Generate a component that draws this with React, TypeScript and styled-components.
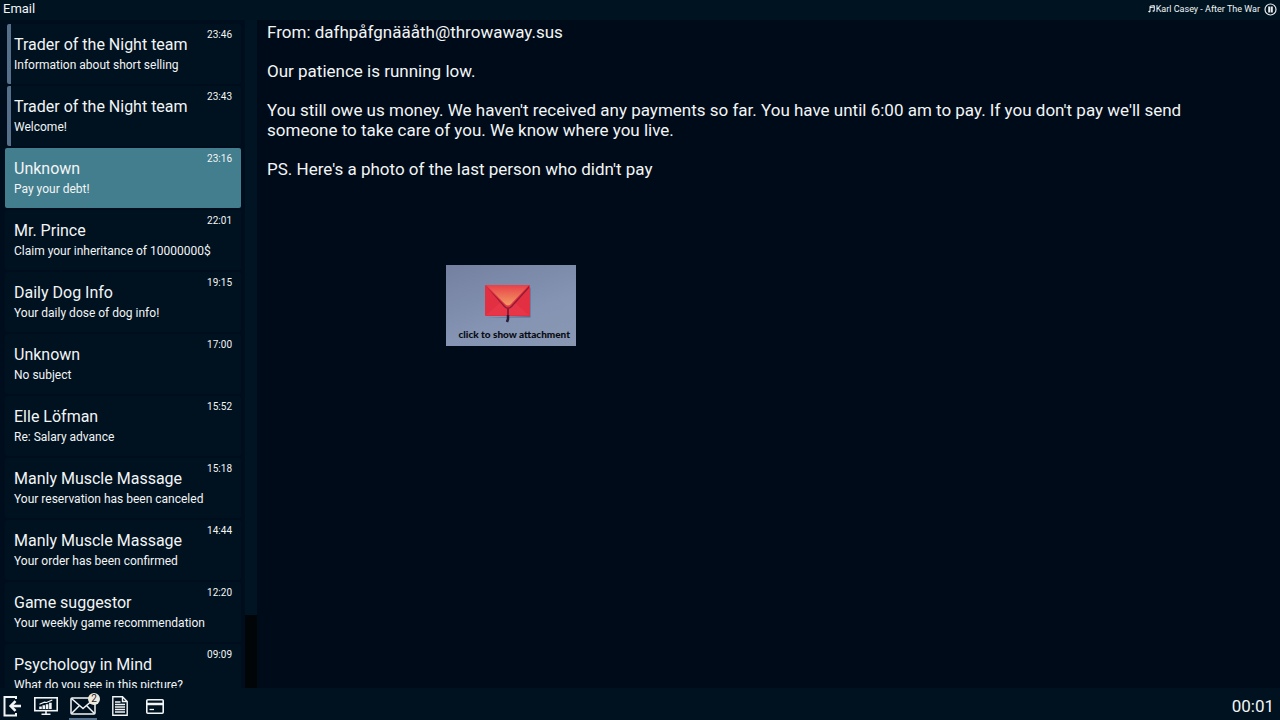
import React, { useState } from "react";
import styled, { createGlobalStyle } from "styled-components";

const GlobalStyle = createGlobalStyle`
  * { box-sizing: border-box; }
  body {
    margin: 0;
    background: #000b19;
    color: #f2f5f5;
    font-family: Roboto, "Liberation Sans", sans-serif;
  }
  button { font: inherit; color: inherit; border: 0; padding: 0; background: none; cursor: pointer; }
  p, h1, h2 { margin: 0; font-weight: 400; }
`;

const Desktop = styled.div`
  display: flex;
  flex-direction: column;
  height: 100vh;
  overflow: hidden;
`;

const TopBar = styled.header`
  display: flex;
  align-items: center;
  justify-content: space-between;
  flex: none;
  height: 20px;
  padding: 0 3px 2px 3px;
  background: #001321;
`;

const AppName = styled.h1`
  font-size: 13px;
  line-height: 18px;
`;

const NowPlaying = styled.div`
  display: flex;
  align-items: center;
  gap: 4px;
  font-size: 9px;
  line-height: 18px;
`;

const Track = styled.span`
  display: flex;
  align-items: center;
  gap: 1px;
`;

const PauseButton = styled.button`
  display: flex;
`;

const Main = styled.main`
  display: flex;
  flex: 1;
  min-height: 0;
`;

const Sidebar = styled.nav`
  display: flex;
  flex: none;
  width: 257px;
  background: #000d1c;
`;

const MailList = styled.ul`
  flex: 1;
  display: flex;
  flex-direction: column;
  gap: 2px;
  margin: 0;
  padding: 4px 4px 0 5px;
  list-style: none;
  overflow: hidden;
`;

const MailItem = styled.li<{ $unread: boolean }>`
  flex: none;
  padding-left: ${(p) => (p.$unread ? 2 : 0)}px;
`;

const MailButton = styled.button<{ $unread: boolean; $selected: boolean }>`
  display: grid;
  grid-template-columns: 1fr auto;
  align-content: start;
  width: 100%;
  height: 60px;
  padding: 4px 9px 0 ${(p) => (p.$unread ? 3 : 9)}px;
  border-left: ${(p) => (p.$unread ? "4px solid #566f8a" : "0")};
  border-radius: 2px;
  background: ${(p) => (p.$selected ? "#437e8e" : "#001120")};
  text-align: left;
`;

const Sender = styled.span`
  padding-top: 7px;
  font-size: 16px;
  line-height: 20px;
  white-space: nowrap;
`;

const Time = styled.time`
  font-size: 10px;
  line-height: 14px;
`;

const Subject = styled.span`
  grid-column: 1 / -1;
  font-size: 12px;
  line-height: 20px;
  white-space: nowrap;
`;

const ScrollTrack = styled.div`
  flex: none;
  width: 12px;
  background: #020508;
`;

const ScrollThumb = styled.div`
  height: 89%;
  background: #001423;
`;

const Message = styled.article`
  flex: 1;
  min-width: 0;
  padding: 2px 40px 0 10px;
  font-size: 17px;
  line-height: 20px;
`;

const Paragraphs = styled.div`
  display: flex;
  flex-direction: column;
  gap: 19px;
`;

const Attachment = styled.button`
  display: flex;
  flex-direction: column;
  align-items: flex-end;
  justify-content: flex-end;
  gap: 4px;
  width: 130px;
  height: 81px;
  margin: 86px 0 0 179px;
  padding: 0 6px 6px 0;
  background: linear-gradient(160deg, #7580a0, #8494b2 60%, #8997b3);
  color: #0a0b12;
`;

const EnvelopeArt = styled.svg`
  display: block;
  align-self: center;
`;

const AttachmentLabel = styled.span`
  font-family: Lato, Roboto, sans-serif;
  font-size: 10px;
  font-weight: 900;
  line-height: 12px;
  white-space: nowrap;
`;

const Taskbar = styled.footer`
  display: flex;
  align-items: stretch;
  justify-content: space-between;
  flex: none;
  height: 32px;
  padding: 6px 6px 0 1px;
  background: #001120;
`;

const Tasks = styled.div`
  display: flex;
  gap: 8px;
`;

const TaskButton = styled.button<{ $active?: boolean; $width: number }>`
  position: relative;
  display: flex;
  align-items: center;
  justify-content: center;
  width: ${(p) => p.$width}px;
  border-bottom: 2px solid ${(p) => (p.$active ? "#566f8a" : "transparent")};
`;

const Badge = styled.span`
  position: absolute;
  top: -1px;
  right: -3px;
  width: 12px;
  height: 12px;
  border-radius: 50%;
  background: #ece9df;
  color: #222;
  font-size: 10px;
  line-height: 12px;
  text-align: center;
`;

const Clock = styled.time`
  font-size: 17px;
  line-height: 24px;
`;

const mails = [
  { from: "Trader of the Night team", subject: "Information about short selling", time: "23:46", unread: true },
  { from: "Trader of the Night team", subject: "Welcome!", time: "23:43", unread: true },
  { from: "Unknown", subject: "Pay your debt!", time: "23:16" },
  { from: "Mr. Prince", subject: "Claim your inheritance of 10000000$", time: "22:01" },
  { from: "Daily Dog Info", subject: "Your daily dose of dog info!", time: "19:15" },
  { from: "Unknown", subject: "No subject", time: "17:00" },
  { from: "Elle Löfman", subject: "Re: Salary advance", time: "15:52" },
  { from: "Manly Muscle Massage", subject: "Your reservation has been canceled", time: "15:18" },
  { from: "Manly Muscle Massage", subject: "Your order has been confirmed", time: "14:44" },
  { from: "Game suggestor", subject: "Your weekly game recommendation", time: "12:20" },
  { from: "Psychology in Mind", subject: "What do you see in this picture?", time: "09:09" },
];

const NoteIcon = () => (
  <svg width="7" height="8" viewBox="0 0 7 8" fill="none" stroke="#f2f5f5" aria-hidden="true">
    <path d="M2 6.5V1.2L6.3 .6V5.8M2 2.6l4.3-.6" />
    <ellipse cx="1.3" cy="6.6" rx="1.1" ry=".8" fill="#f2f5f5" stroke="none" />
    <ellipse cx="5.5" cy="6" rx="1.1" ry=".8" fill="#f2f5f5" stroke="none" />
  </svg>
);

const PauseIcon = () => (
  <svg width="13" height="13" viewBox="0 0 13 13" fill="none" stroke="#e8ecee" aria-hidden="true">
    <circle cx="6.5" cy="6.5" r="5.5" strokeWidth="1.2" />
    <path d="M5.2 3.6v5.8M7.8 3.6v5.8" strokeWidth="2" />
  </svg>
);

const ExitIcon = () => (
  <svg width="20" height="22" viewBox="0 0 20 22" fill="none" stroke="#f2f5f5" aria-hidden="true">
    <path d="M14 4V2H2.500v18.500H14V18" strokeWidth="2" />
    <path d="M19 11H9.500" strokeWidth="2.600" />
    <path d="M13.500 6.200L8.700 11l4.800 4.800" strokeWidth="2.600" />
  </svg>
);

const MonitorIcon = () => (
  <svg width="24" height="18" viewBox="0 0 24 18" fill="none" stroke="#f2f5f5" aria-hidden="true">
    <rect x=".8" y=".8" width="22.400" height="12.900" strokeWidth="1.600" />
    <path d="M12 14v3M7.500 17.200h9" strokeWidth="1.600" />
    <path d="M6.500 12V9.500M9.800 12V8.200M13.100 12V7.200M16.400 12V5.800" strokeWidth="2.600" />
    <path d="M5.500 7.200l5-2 2 .3L18.300 3" strokeWidth="1.200" />
  </svg>
);

const EnvelopeIcon = () => (
  <svg width="26" height="18" viewBox="0 0 26 18" fill="none" stroke="#f2f5f5" strokeWidth="1.500" aria-hidden="true">
    <rect x="1" y="1" width="24" height="16" rx="1" />
    <path d="M1.500 1.500L13 11.500 24.500 1.500M1.500 16.500l8-8M24.500 16.500l-8-8" />
  </svg>
);

const DocumentIcon = () => (
  <svg width="16" height="20" viewBox="0 0 16 20" fill="none" stroke="#f2f5f5" aria-hidden="true">
    <path d="M.8.8h9.700l4.700 4.700v13.700H.8zM10.500.8v4.700h4.700" strokeWidth="1.400" />
    <path d="M3 6h5.500M3 8.500h10M3 11h10M3 13.500h10M3 16h10" strokeWidth="1.300" />
  </svg>
);

const CardIcon = () => (
  <svg width="18" height="15" viewBox="0 0 18 15" fill="none" stroke="#f2f5f5" aria-hidden="true">
    <rect x=".8" y=".8" width="16.400" height="13.400" rx="1" strokeWidth="1.600" />
    <path d="M1 5h16" strokeWidth="2.500" />
    <path d="M3.500 10.500H8" strokeWidth="1.300" />
  </svg>
);

const RedEnvelope = () => (
  <EnvelopeArt width="48" height="40" viewBox="0 0 48 40" aria-hidden="true">
    <defs>
      <linearGradient id="flap" x1="0" y1="0" x2="0" y2="1">
        <stop offset="0" stopColor="#e8404a" />
        <stop offset="0.450" stopColor="#ec6a55" />
        <stop offset="1" stopColor="#f29a62" />
      </linearGradient>
    </defs>
    <path d="M2 33.500h44.500V4L45 2v30z" fill="#4d4a6c" opacity=".6" />
    <rect x="1" y="1" width="45" height="31" rx="1" fill="#e22f42" />
    <path d="M2 31L17 18l7 5 6-5 15 13z" fill="#e73648" />
    <path d="M2 2l19 20q3 3 6 0L45 2v2L28 23q-4 4-8 0z" fill="#8c1c35" />
    <path d="M2 1h43L27 20q-3 3-6 0z" fill="url(#flap)" />
    <path d="M24 25v6" fill="none" stroke="#8c1c35" strokeWidth="2" />
    <path d="M24 31v4l-1 3" fill="none" stroke="#2c1c3d" strokeWidth="2.500" />
  </EnvelopeArt>
);

export default function App() {
  const [selected, setSelected] = useState(2);

  return (
    <>
      <GlobalStyle />
      <Desktop>
        <TopBar>
          <AppName>Email</AppName>
          <NowPlaying>
            <Track>
              <NoteIcon />
              Karl Casey - After The War
            </Track>
            <PauseButton aria-label="Pause music">
              <PauseIcon />
            </PauseButton>
          </NowPlaying>
        </TopBar>
        <Main>
          <Sidebar aria-label="Inbox">
            <MailList>
              {mails.map((mail, i) => (
                <MailItem key={mail.time} $unread={!!mail.unread}>
                  <MailButton $unread={!!mail.unread} $selected={i === selected} onClick={() => setSelected(i)}>
                    <Sender>{mail.from}</Sender>
                    <Time>{mail.time}</Time>
                    <Subject>{mail.subject}</Subject>
                  </MailButton>
                </MailItem>
              ))}
            </MailList>
            <ScrollTrack>
              <ScrollThumb />
            </ScrollTrack>
          </Sidebar>
          <Message>
            <Paragraphs>
              <p>From: dafhpåfgnääåth@throwaway.sus</p>
              <p>Our patience is running low.</p>
              <p>
                You still owe us money. We haven't received any payments so far. You have until 6:00 am to pay. If you
                don't pay we'll send someone to take care of you. We know where you live.
              </p>
              <p>PS. Here's a photo of the last person who didn't pay</p>
            </Paragraphs>
            <Attachment>
              <RedEnvelope />
              <AttachmentLabel>click to show attachment</AttachmentLabel>
            </Attachment>
          </Message>
        </Main>
        <Taskbar>
          <Tasks>
            <TaskButton $width={22} aria-label="Log out">
              <ExitIcon />
            </TaskButton>
            <TaskButton $width={30} aria-label="Trading">
              <MonitorIcon />
            </TaskButton>
            <TaskButton $width={28} $active aria-label="Email">
              <EnvelopeIcon />
              <Badge>2</Badge>
            </TaskButton>
            <TaskButton $width={30} aria-label="Documents">
              <DocumentIcon />
            </TaskButton>
            <TaskButton $width={24} aria-label="Bank">
              <CardIcon />
            </TaskButton>
          </Tasks>
          <Clock>00:01</Clock>
        </Taskbar>
      </Desktop>
    </>
  );
}
